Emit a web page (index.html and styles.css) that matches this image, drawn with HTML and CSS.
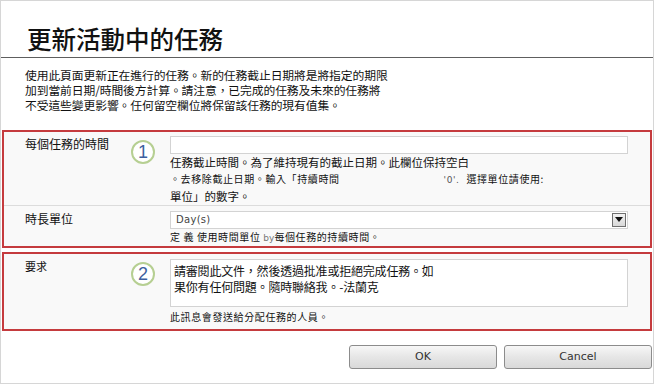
FILE: index.html
```html
<!DOCTYPE html>
<html lang="zh-Hant">
<head>
<meta charset="utf-8">
<link rel="stylesheet" href="styles.css">
</head>
<body>
<div class="window">
  <div class="header"><h1 class="title">更新活動中的任務</h1></div>
  <div class="desc">
    <div class="line">使用此頁面更新正在進行的任務。新的任務截止日期將是將指定的期限</div>
    <div class="line">加到當前日期/時間後方計算。請注意，已完成的任務及未來的任務將</div>
    <div class="line">不受這些變更影響。任何留空欄位將保留該任務的現有值集。</div>
  </div>

  <div class="box">
    <div class="row">
      <div class="label">每個任務的時間</div>
      <div class="badge-cell"><span class="badge">1</span></div>
      <div class="field">
        <div class="input"></div>
        <div class="help">任務截止時間。為了維持現有的截止日期。此欄位保持空白</div>
        <div class="help small">。去移除截止日期。輸入「持續時間<span class="zero">'0'.</span> 選擇單位請使用:</div>
        <div class="help">單位」的數字。</div>
      </div>
    </div>
    <div class="row row-sep">
      <div class="label label-2">時長單位</div>
      <div class="badge-cell"></div>
      <div class="field field-2">
        <div class="select"><span class="select-text">Day(s)</span><span class="drop"><svg width="8" height="5" viewBox="0 0 8 5"><path d="M0 0H8L4 5Z" fill="#111"/></svg></span></div>
        <div class="help small">定 義 使用時間單位 <span class="by">by</span>每個任務的持續時間。</div>
      </div>
    </div>
  </div>

  <div class="box box-2">
    <div class="row">
      <div class="label label-3">要求</div>
      <div class="badge-cell"><span class="badge">2</span></div>
      <div class="field field-3">
        <div class="textarea">請審閱此文件，然後透過批准或拒絕完成任務。如<br>果你有任何問題。隨時聯絡我。-法蘭克</div>
        <div class="help small msg">此訊息會發送給分配任務的人員。</div>
      </div>
    </div>
  </div>

  <div class="buttons">
    <button class="btn">OK</button>
    <button class="btn">Cancel</button>
  </div>
</div>
</body>
</html>
```

FILE: styles.css
```css
html, body {
  margin: 0;
  padding: 0;
  background: #fff;
}
body {
  font-family: "Noto Sans CJK TC", "Noto Sans", sans-serif;
  color: #111;
}
.window {
  width: 654px;
  height: 384px;
  box-sizing: border-box;
  border: 1px solid #d6d6d6;
  overflow: hidden;
}
.header {
  height: 57px;
  box-sizing: border-box;
  border-bottom: 1px solid #5e5e5e;
  display: flex;
  align-items: flex-end;
  padding: 0 0 3px 26px;
}
.title {
  margin: 0;
  font-size: 24.5px;
  font-weight: 500;
  line-height: 30px;
  color: #111;
}
.desc {
  margin: 9px 0 0 0;
  padding-left: 24px;
  font-size: 11.8px;
  letter-spacing: -0.1px;
}
.line {
  height: 15px;
  line-height: 15px;
  white-space: nowrap;
}
.box {
  margin: 18px 1px 0 1px;
  border: 2px solid #c53b3e;
  background: #f9f9f9;
}
.box-2 {
  margin-top: 4px;
}
.row {
  display: grid;
  grid-template-columns: 127px 39px 1fr;
}
.row-sep {
  border-top: 1px solid #dcdcdc;
}
.label {
  padding: 3px 0 0 21px;
  font-size: 12px;
  line-height: 18px;
}
.label-2 {
  padding-top: 4px;
}
.label-3 {
  font-size: 11px;
}
.badge-cell {
  padding-top: 8px;
}
.badge {
  display: flex;
  align-items: center;
  justify-content: center;
  width: 20px;
  height: 20px;
  border: 2px solid #b6cf92;
  border-radius: 50%;
  background: #fff;
  color: #3d5f9e;
  font-family: "Liberation Sans", sans-serif;
  font-size: 18px;
  line-height: 1;
}
.field {
  padding: 4px 22px 0 0;
}
.field-2 {
  padding-top: 5px;
}
.field-3 {
  padding-top: 5px;
  padding-bottom: 3px;
}
.input {
  height: 18px;
  box-sizing: border-box;
  border: 1px solid #d3d3d3;
  background: #fff;
}
.help {
  font-size: 11.5px;
  line-height: 16.5px;
  color: #111;
}
.help.small {
  font-size: 10px;
  letter-spacing: 0.6px;
}
.zero {
  margin-left: 104px;
  margin-right: 4px;
  color: #555;
  font-family: "DejaVu Sans", sans-serif;
  font-size: 9px;
}
.select {
  height: 18px;
  box-sizing: border-box;
  border: 1px solid #d3d3d3;
  background: #fff;
  display: flex;
  align-items: center;
  justify-content: space-between;
  padding: 0 1px 0 5px;
}
.select-text {
  font-family: "DejaVu Sans", sans-serif;
  font-size: 10px;
  color: #444;
  letter-spacing: 0.3px;
}
.drop {
  width: 14px;
  height: 14px;
  box-sizing: border-box;
  border: 1px solid #6f6f6f;
  background: linear-gradient(#f2f2f2, #d8d8d8);
  display: flex;
  align-items: center;
  justify-content: center;
}
.by {
  color: #777;
  font-family: "DejaVu Sans", sans-serif;
  font-size: 9px;
  letter-spacing: 0;
}
.textarea {
  height: 48px;
  box-sizing: border-box;
  border: 1px solid #d3d3d3;
  background: #fff;
  padding: 3px 3px;
  font-size: 12px;
  line-height: 16px;
  letter-spacing: -0.2px;
}
.msg {
  padding-top: 2px;
}
.buttons {
  display: flex;
  justify-content: flex-end;
  gap: 7px;
  margin: 14px 1px 0 0;
}
.btn {
  width: 148px;
  height: 24px;
  box-sizing: border-box;
  border: 1px solid #8c8c8c;
  border-radius: 3px;
  background: linear-gradient(#f7f7f7, #e6e6e6 50%, #d9d9d9);
  font-family: "DejaVu Sans", sans-serif;
  font-size: 11px;
  color: #333;
  padding: 0;
}
```
